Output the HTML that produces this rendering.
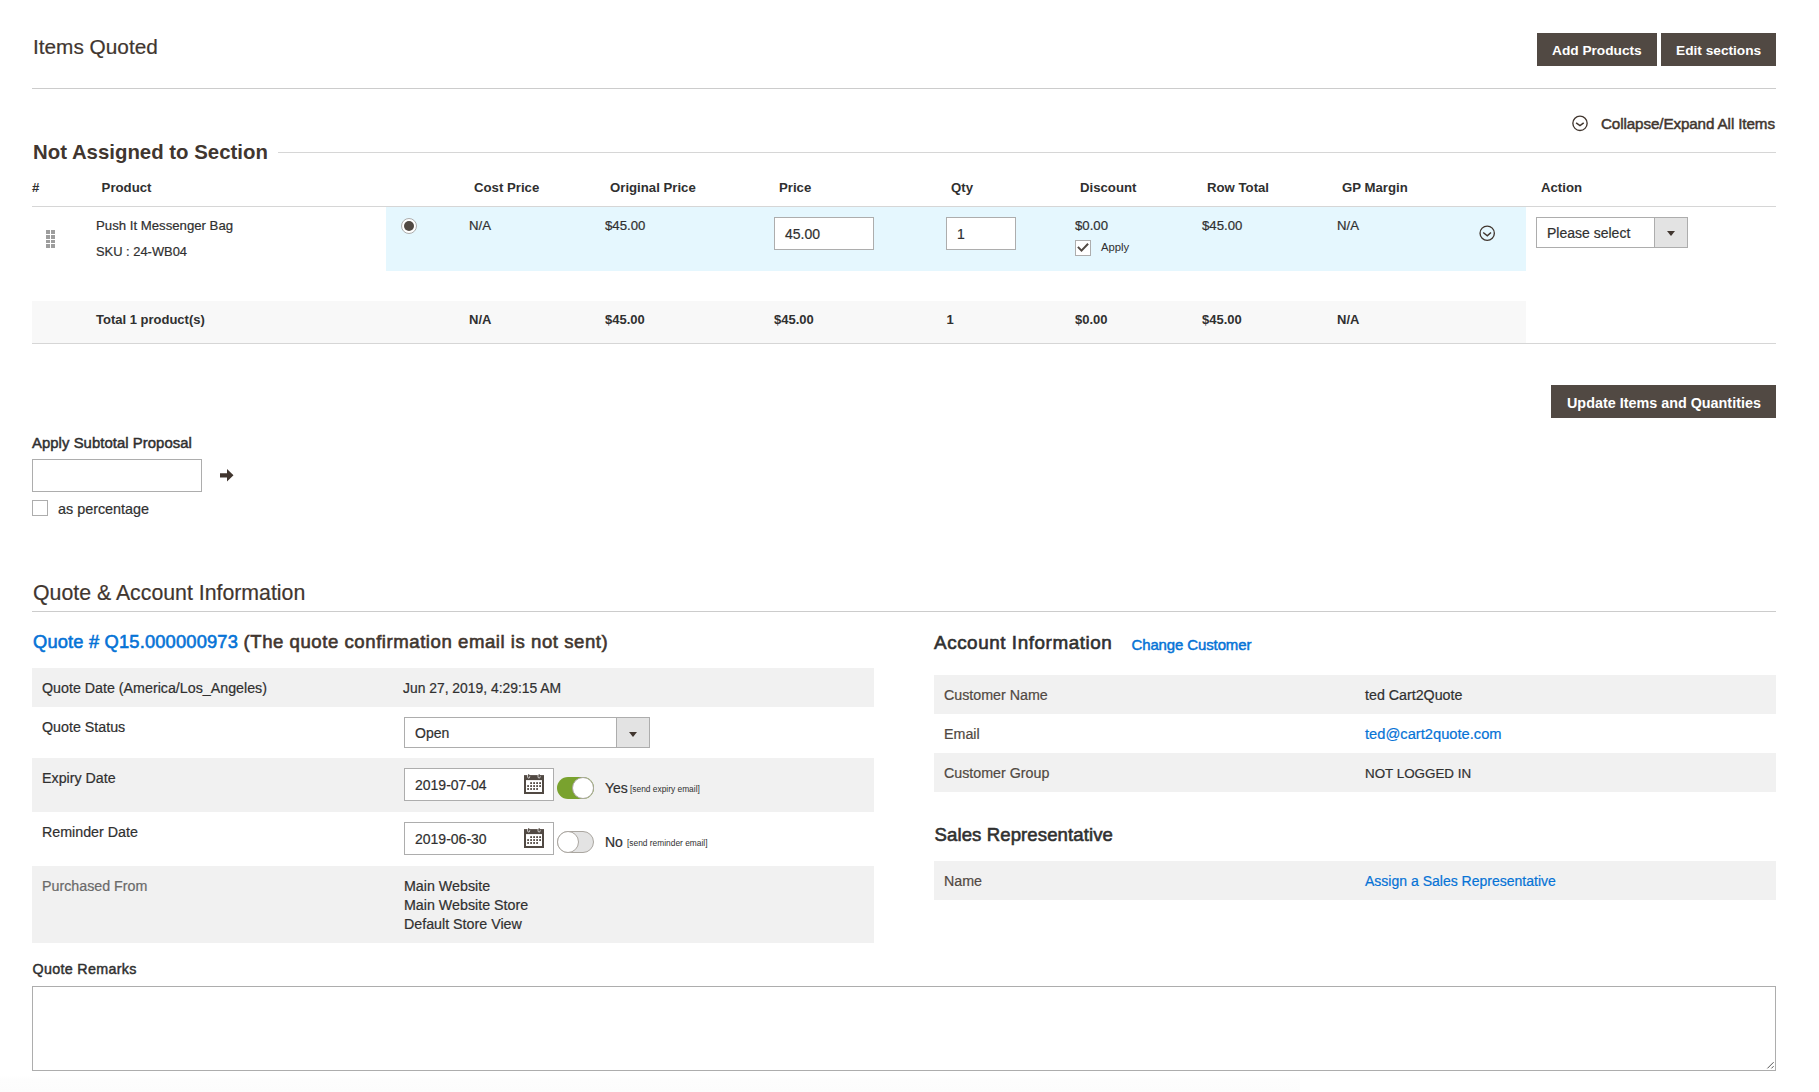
<!DOCTYPE html>
<html><head><meta charset="utf-8"><title>Items Quoted</title>
<style>
html,body{margin:0;padding:0;background:#fff;width:1819px;height:1092px;overflow:hidden;}
body{position:relative;font-family:"Liberation Sans",sans-serif;}
.t{position:absolute;white-space:nowrap;}
.r{position:absolute;box-sizing:content-box;}
</style></head><body>
<div class="t" style="left:33px;top:37.39px;font-size:20.8px;line-height:20.8px;font-weight:normal;color:#41362f;-webkit-text-stroke:0.2px #41362f;">Items Quoted</div>
<div class="r" style="left:1537px;top:33px;width:120px;height:33px;background:#514943"></div>
<div class="t" style="left:1552px;top:44.40px;font-size:13.7px;line-height:13.7px;font-weight:bold;color:#fff;">Add Products</div>
<div class="r" style="left:1661px;top:33px;width:115px;height:33px;background:#514943"></div>
<div class="t" style="left:1676px;top:44.40px;font-size:13.7px;line-height:13.7px;font-weight:bold;color:#fff;">Edit sections</div>
<div class="r" style="left:32px;top:88px;width:1744px;height:1px;background:#cccccc"></div>
<svg class="r" style="left:1571px;top:114px" width="18" height="18" viewBox="0 0 18 18"><circle cx="9" cy="9.3" r="7.15" fill="none" stroke="#41362f" stroke-width="1.35"/><path d="M5.1 8.8 L9 11.6 L12.7 8.8" fill="none" stroke="#41362f" stroke-width="1.5"/></svg>
<div class="t" style="left:1601px;top:116.32px;font-size:15.22px;line-height:15.22px;font-weight:normal;color:#41362f;-webkit-text-stroke:0.49px #41362f;letter-spacing:-0.117px">Collapse/Expand All Items</div>
<div class="t" style="left:33px;top:141.73px;font-size:20.4px;line-height:20.4px;font-weight:bold;color:#41362f;">Not Assigned to Section</div>
<div class="r" style="left:278px;top:152px;width:1498px;height:1px;background:#d6d6d6"></div>
<div class="t" style="left:32px;top:180.83px;font-size:13.2px;line-height:13.2px;font-weight:bold;color:#303030;">#</div>
<div class="t" style="left:101.6px;top:180.83px;font-size:13.2px;line-height:13.2px;font-weight:bold;color:#303030;">Product</div>
<div class="t" style="left:474px;top:180.83px;font-size:13.2px;line-height:13.2px;font-weight:bold;color:#303030;">Cost Price</div>
<div class="t" style="left:610px;top:180.83px;font-size:13.2px;line-height:13.2px;font-weight:bold;color:#303030;">Original Price</div>
<div class="t" style="left:779px;top:180.83px;font-size:13.2px;line-height:13.2px;font-weight:bold;color:#303030;">Price</div>
<div class="t" style="left:951px;top:180.83px;font-size:13.2px;line-height:13.2px;font-weight:bold;color:#303030;">Qty</div>
<div class="t" style="left:1080px;top:180.83px;font-size:13.2px;line-height:13.2px;font-weight:bold;color:#303030;">Discount</div>
<div class="t" style="left:1207px;top:180.83px;font-size:13.2px;line-height:13.2px;font-weight:bold;color:#303030;">Row Total</div>
<div class="t" style="left:1342px;top:180.83px;font-size:13.2px;line-height:13.2px;font-weight:bold;color:#303030;">GP Margin</div>
<div class="t" style="left:1541px;top:180.83px;font-size:13.2px;line-height:13.2px;font-weight:bold;color:#303030;">Action</div>
<div class="r" style="left:32px;top:206px;width:1744px;height:1px;background:#d6d6d6"></div>
<div class="r" style="left:386px;top:207px;width:1140px;height:64px;background:#e5f7fe"></div>
<div class="r" style="left:46px;top:230px;width:4px;height:4px;background:#9d9d9d"></div>
<div class="r" style="left:46px;top:235px;width:4px;height:3.5px;background:#9d9d9d"></div>
<div class="r" style="left:46px;top:239.5px;width:4px;height:3.5px;background:#9d9d9d"></div>
<div class="r" style="left:46px;top:244px;width:4px;height:4px;background:#9d9d9d"></div>
<div class="r" style="left:51px;top:230px;width:4px;height:4px;background:#9d9d9d"></div>
<div class="r" style="left:51px;top:235px;width:4px;height:3.5px;background:#9d9d9d"></div>
<div class="r" style="left:51px;top:239.5px;width:4px;height:3.5px;background:#9d9d9d"></div>
<div class="r" style="left:51px;top:244px;width:4px;height:4px;background:#9d9d9d"></div>
<div class="t" style="left:96px;top:219.03px;font-size:13.2px;line-height:13.2px;font-weight:normal;color:#303030;-webkit-text-stroke:0.2px #303030;">Push It Messenger Bag</div>
<div class="t" style="left:96px;top:246.48px;font-size:12.9px;line-height:12.9px;font-weight:normal;color:#303030;-webkit-text-stroke:0.2px #303030;">SKU : 24-WB04</div>
<div class="r" style="left:401px;top:218px;width:14px;height:14px;border:1px solid #adadad;border-radius:50%;background:#fff"></div>
<div class="r" style="left:404px;top:221px;width:10px;height:10px;border-radius:50%;background:#514943"></div>
<div class="t" style="left:469px;top:218.83px;font-size:13.2px;line-height:13.2px;font-weight:normal;color:#303030;-webkit-text-stroke:0.2px #303030;">N/A</div>
<div class="t" style="left:605px;top:218.83px;font-size:13.2px;line-height:13.2px;font-weight:normal;color:#303030;-webkit-text-stroke:0.2px #303030;">$45.00</div>
<div class="r" style="left:774px;top:217px;width:98px;height:31px;border:1px solid #adadad;background:#fff"></div>
<div class="t" style="left:785px;top:227.15px;font-size:14px;line-height:14px;font-weight:normal;color:#303030;-webkit-text-stroke:0.2px #303030;">45.00</div>
<div class="r" style="left:946px;top:217px;width:68px;height:31px;border:1px solid #adadad;background:#fff"></div>
<div class="t" style="left:957px;top:227.15px;font-size:14px;line-height:14px;font-weight:normal;color:#303030;-webkit-text-stroke:0.2px #303030;">1</div>
<div class="t" style="left:1075px;top:218.83px;font-size:13.2px;line-height:13.2px;font-weight:normal;color:#303030;-webkit-text-stroke:0.2px #303030;">$0.00</div>
<div class="r" style="left:1075px;top:240px;width:14px;height:14px;border:1px solid #adadad;background:#fff"></div>
<svg class="r" style="left:1075px;top:240px" width="16" height="16" viewBox="0 0 16 16"><path d="M2.9 6.9 L6.5 10.6 L13.1 3.7" fill="none" stroke="#514943" stroke-width="2"/></svg>
<div class="t" style="left:1101px;top:242.43px;font-size:11.3px;line-height:11.3px;font-weight:normal;color:#303030;">Apply</div>
<div class="t" style="left:1202px;top:218.83px;font-size:13.2px;line-height:13.2px;font-weight:normal;color:#303030;-webkit-text-stroke:0.2px #303030;">$45.00</div>
<div class="t" style="left:1337px;top:218.83px;font-size:13.2px;line-height:13.2px;font-weight:normal;color:#303030;-webkit-text-stroke:0.2px #303030;">N/A</div>
<svg class="r" style="left:1478px;top:224px" width="18" height="18" viewBox="0 0 18 18"><circle cx="9.2" cy="9.2" r="7.15" fill="none" stroke="#41362f" stroke-width="1.35"/><path d="M5.2 8.5 L9.3 11.8 L13 8.5" fill="none" stroke="#41362f" stroke-width="1.5"/></svg>
<div class="r" style="left:1536px;top:217px;width:150px;height:29px;border:1px solid #adadad;background:#fff"></div>
<div class="r" style="left:1654px;top:218px;width:32px;height:29px;background:#e3e3e3;border-left:1px solid #adadad"></div>
<svg class="r" style="left:1666px;top:231px" width="10" height="7" viewBox="0 0 10 7"><path d="M1 0 L9 0 L5 5 Z" fill="#41362f"/></svg>
<div class="t" style="left:1547px;top:226.15px;font-size:14px;line-height:14px;font-weight:normal;color:#303030;-webkit-text-stroke:0.2px #303030;">Please select</div>
<div class="r" style="left:32px;top:301px;width:1494px;height:42px;background:#f8f8f8"></div>
<div class="r" style="left:32px;top:343px;width:1744px;height:1px;background:#d6d6d6"></div>
<div class="t" style="left:96px;top:313.00px;font-size:13.0px;line-height:13.0px;font-weight:bold;color:#303030;">Total 1 product(s)</div>
<div class="t" style="left:469px;top:313.00px;font-size:13.0px;line-height:13.0px;font-weight:bold;color:#303030;">N/A</div>
<div class="t" style="left:605px;top:313.00px;font-size:13.0px;line-height:13.0px;font-weight:bold;color:#303030;">$45.00</div>
<div class="t" style="left:774px;top:313.00px;font-size:13.0px;line-height:13.0px;font-weight:bold;color:#303030;">$45.00</div>
<div class="t" style="left:946.5px;top:313.00px;font-size:13.0px;line-height:13.0px;font-weight:bold;color:#303030;">1</div>
<div class="t" style="left:1075px;top:313.00px;font-size:13.0px;line-height:13.0px;font-weight:bold;color:#303030;">$0.00</div>
<div class="t" style="left:1202px;top:313.00px;font-size:13.0px;line-height:13.0px;font-weight:bold;color:#303030;">$45.00</div>
<div class="t" style="left:1337px;top:313.00px;font-size:13.0px;line-height:13.0px;font-weight:bold;color:#303030;">N/A</div>
<div class="r" style="left:1551px;top:385px;width:225px;height:33px;background:#514943"></div>
<div class="t" style="left:1567px;top:395.84px;font-size:14.37px;line-height:14.37px;font-weight:bold;color:#fff;">Update Items and Quantities</div>
<div class="t" style="left:32px;top:435.90px;font-size:14.89px;line-height:14.89px;font-weight:normal;color:#303030;-webkit-text-stroke:0.48px #303030;letter-spacing:0.049px">Apply Subtotal Proposal</div>
<div class="r" style="left:32px;top:459px;width:168px;height:31px;border:1px solid #adadad;background:#fff"></div>
<svg class="r" style="left:220px;top:468.5px" width="14" height="13" viewBox="0 0 14 13"><path d="M0 4.3 H7 V0 L13.5 6.3 L7 12.6 V8.4 H0 Z" fill="#41362f"/></svg>
<div class="r" style="left:32px;top:500px;width:14px;height:14px;border:1px solid #adadad;background:#fff"></div>
<div class="t" style="left:58px;top:501.84px;font-size:14.36px;line-height:14.36px;font-weight:normal;color:#303030;-webkit-text-stroke:0.2px #303030;">as percentage</div>
<div class="t" style="left:33px;top:582.97px;font-size:21.3px;line-height:21.3px;font-weight:normal;color:#41362f;-webkit-text-stroke:0.2px #41362f;">Quote &amp; Account Information</div>
<div class="r" style="left:32px;top:611px;width:1744px;height:1px;background:#cccccc"></div>
<div class="t" style="left:33px;top:633.00px;font-size:18.31px;line-height:18.31px;font-weight:normal;color:#0673d6;-webkit-text-stroke:0.59px #0673d6;letter-spacing:0.172px">Quote # Q15.000000973</div>
<div class="t" style="left:243.5px;top:632.76px;font-size:18.6px;line-height:18.6px;font-weight:normal;color:#41362f;-webkit-text-stroke:0.6px #41362f;letter-spacing:0.540px">(The quote confirmation email is not sent)</div>
<div class="r" style="left:32px;top:668px;width:842px;height:39px;background:#f1f1f1"></div>
<div class="t" style="left:42px;top:681.44px;font-size:14.25px;line-height:14.25px;font-weight:normal;color:#303030;-webkit-text-stroke:0.2px #303030;">Quote Date (America/Los_Angeles)</div>
<div class="t" style="left:403px;top:682.25px;font-size:13.88px;line-height:13.88px;font-weight:normal;color:#303030;-webkit-text-stroke:0.2px #303030;">Jun 27, 2019, 4:29:15 AM</div>
<div class="t" style="left:42px;top:719.94px;font-size:14.25px;line-height:14.25px;font-weight:normal;color:#303030;-webkit-text-stroke:0.2px #303030;">Quote Status</div>
<div class="r" style="left:404px;top:717px;width:244px;height:29px;border:1px solid #adadad;background:#fff"></div>
<div class="r" style="left:616px;top:718px;width:32px;height:29px;background:#e3e3e3;border-left:1px solid #adadad"></div>
<svg class="r" style="left:628px;top:732px" width="10" height="7" viewBox="0 0 10 7"><path d="M1 0 L9 0 L5 5 Z" fill="#41362f"/></svg>
<div class="t" style="left:415px;top:725.75px;font-size:14px;line-height:14px;font-weight:normal;color:#303030;-webkit-text-stroke:0.2px #303030;">Open</div>
<div class="r" style="left:32px;top:758px;width:842px;height:54px;background:#f1f1f1"></div>
<div class="t" style="left:42px;top:770.94px;font-size:14.25px;line-height:14.25px;font-weight:normal;color:#303030;-webkit-text-stroke:0.2px #303030;">Expiry Date</div>
<div class="r" style="left:404px;top:768px;width:148px;height:31px;border:1px solid #adadad;background:#fff"></div>
<svg class="r" style="left:523.9px;top:773.9px" width="21" height="21" viewBox="0 0 21 21"><rect x="0" y="1.1" width="20" height="18.9" fill="#514943"/><rect x="2" y="6.1" width="16" height="11.9" fill="#fff"/><path d="M3.7 0.2 V3 A1 1 0 0 0 5.7 3 V2.2 M14.1 0.2 V3 A1 1 0 0 0 16.1 3 V2.2" fill="none" stroke="#fff" stroke-width="0.8"/><rect x="4.3" y="0" width="0.9" height="3.3" fill="#514943"/><rect x="14.7" y="0" width="0.9" height="3.3" fill="#514943"/><rect x="6.2" y="8.20" width="1.8" height="1.8" fill="#514943"/><rect x="9.2" y="8.20" width="1.8" height="1.8" fill="#514943"/><rect x="12.2" y="8.20" width="1.8" height="1.8" fill="#514943"/><rect x="15.2" y="8.20" width="1.8" height="1.8" fill="#514943"/><rect x="3.2" y="11.15" width="1.8" height="1.8" fill="#514943"/><rect x="6.2" y="11.15" width="1.8" height="1.8" fill="#514943"/><rect x="9.2" y="11.15" width="1.8" height="1.8" fill="#514943"/><rect x="12.2" y="11.15" width="1.8" height="1.8" fill="#514943"/><rect x="15.2" y="11.15" width="1.8" height="1.8" fill="#514943"/><rect x="3.2" y="14.10" width="1.8" height="1.8" fill="#514943"/><rect x="6.2" y="14.10" width="1.8" height="1.8" fill="#514943"/><rect x="9.2" y="14.10" width="1.8" height="1.8" fill="#514943"/><rect x="12.2" y="14.10" width="1.8" height="1.8" fill="#514943"/></svg>
<div class="t" style="left:415px;top:778.15px;font-size:14px;line-height:14px;font-weight:normal;color:#303030;-webkit-text-stroke:0.2px #303030;">2019-07-04</div>
<div class="r" style="left:557px;top:777px;width:37px;height:22px;box-sizing:border-box;border-radius:11px;background:#79a22e"></div>
<div class="r" style="left:572px;top:777px;width:22px;height:22px;box-sizing:border-box;border-radius:50%;background:#fff;border:1px solid #aaa6a0"></div>
<div class="t" style="left:605px;top:781.15px;font-size:14px;line-height:14px;font-weight:normal;color:#303030;-webkit-text-stroke:0.2px #303030;">Yes</div>
<div class="t" style="left:630px;top:784.89px;font-size:8.4px;line-height:8.4px;font-weight:normal;color:#303030;">[send expiry email]</div>
<div class="t" style="left:42px;top:824.94px;font-size:14.25px;line-height:14.25px;font-weight:normal;color:#303030;-webkit-text-stroke:0.2px #303030;">Reminder Date</div>
<div class="r" style="left:404px;top:822px;width:148px;height:31px;border:1px solid #adadad;background:#fff"></div>
<svg class="r" style="left:523.9px;top:827.9px" width="21" height="21" viewBox="0 0 21 21"><rect x="0" y="1.1" width="20" height="18.9" fill="#514943"/><rect x="2" y="6.1" width="16" height="11.9" fill="#fff"/><path d="M3.7 0.2 V3 A1 1 0 0 0 5.7 3 V2.2 M14.1 0.2 V3 A1 1 0 0 0 16.1 3 V2.2" fill="none" stroke="#fff" stroke-width="0.8"/><rect x="4.3" y="0" width="0.9" height="3.3" fill="#514943"/><rect x="14.7" y="0" width="0.9" height="3.3" fill="#514943"/><rect x="6.2" y="8.20" width="1.8" height="1.8" fill="#514943"/><rect x="9.2" y="8.20" width="1.8" height="1.8" fill="#514943"/><rect x="12.2" y="8.20" width="1.8" height="1.8" fill="#514943"/><rect x="15.2" y="8.20" width="1.8" height="1.8" fill="#514943"/><rect x="3.2" y="11.15" width="1.8" height="1.8" fill="#514943"/><rect x="6.2" y="11.15" width="1.8" height="1.8" fill="#514943"/><rect x="9.2" y="11.15" width="1.8" height="1.8" fill="#514943"/><rect x="12.2" y="11.15" width="1.8" height="1.8" fill="#514943"/><rect x="15.2" y="11.15" width="1.8" height="1.8" fill="#514943"/><rect x="3.2" y="14.10" width="1.8" height="1.8" fill="#514943"/><rect x="6.2" y="14.10" width="1.8" height="1.8" fill="#514943"/><rect x="9.2" y="14.10" width="1.8" height="1.8" fill="#514943"/><rect x="12.2" y="14.10" width="1.8" height="1.8" fill="#514943"/></svg>
<div class="t" style="left:415px;top:832.15px;font-size:14px;line-height:14px;font-weight:normal;color:#303030;-webkit-text-stroke:0.2px #303030;">2019-06-30</div>
<div class="r" style="left:557px;top:831px;width:37px;height:22px;box-sizing:border-box;border-radius:11px;background:#e3e3e3;border:1px solid #aaa6a0"></div>
<div class="r" style="left:557px;top:831px;width:22px;height:22px;box-sizing:border-box;border-radius:50%;background:#fff;border:1px solid #aaa6a0"></div>
<div class="t" style="left:605px;top:835.15px;font-size:14px;line-height:14px;font-weight:normal;color:#303030;-webkit-text-stroke:0.2px #303030;">No</div>
<div class="t" style="left:627px;top:838.89px;font-size:8.4px;line-height:8.4px;font-weight:normal;color:#303030;">[send reminder email]</div>
<div class="r" style="left:32px;top:866px;width:842px;height:77px;background:#f1f1f1"></div>
<div class="t" style="left:42px;top:878.94px;font-size:14.25px;line-height:14.25px;font-weight:normal;color:#6a6a6a;-webkit-text-stroke:0.2px #6a6a6a;">Purchased From</div>
<div class="t" style="left:404px;top:878.94px;font-size:14.25px;line-height:14.25px;font-weight:normal;color:#303030;-webkit-text-stroke:0.2px #303030;">Main Website</div>
<div class="t" style="left:404px;top:898.24px;font-size:14.25px;line-height:14.25px;font-weight:normal;color:#303030;-webkit-text-stroke:0.2px #303030;">Main Website Store</div>
<div class="t" style="left:404px;top:916.64px;font-size:14.25px;line-height:14.25px;font-weight:normal;color:#303030;-webkit-text-stroke:0.2px #303030;">Default Store View</div>
<div class="t" style="left:934px;top:634.02px;font-size:18.88px;line-height:18.88px;font-weight:normal;color:#303030;-webkit-text-stroke:0.6px #303030;letter-spacing:0.561px">Account Information</div>
<div class="t" style="left:1131.5px;top:638.34px;font-size:14.95px;line-height:14.95px;font-weight:normal;color:#0673d6;-webkit-text-stroke:0.48px #0673d6;letter-spacing:-0.094px">Change Customer</div>
<div class="r" style="left:934px;top:675px;width:842px;height:39px;background:#f1f1f1"></div>
<div class="r" style="left:934px;top:753px;width:842px;height:39px;background:#f1f1f1"></div>
<div class="t" style="left:944px;top:687.94px;font-size:14.25px;line-height:14.25px;font-weight:normal;color:#514943;-webkit-text-stroke:0.2px #514943;">Customer Name</div>
<div class="t" style="left:1365px;top:687.94px;font-size:14.25px;line-height:14.25px;font-weight:normal;color:#303030;-webkit-text-stroke:0.2px #303030;">ted Cart2Quote</div>
<div class="t" style="left:944px;top:726.94px;font-size:14.25px;line-height:14.25px;font-weight:normal;color:#514943;-webkit-text-stroke:0.2px #514943;">Email</div>
<div class="t" style="left:1365px;top:726.56px;font-size:14.7px;line-height:14.7px;font-weight:normal;color:#0673d6;-webkit-text-stroke:0.2px #0673d6;">ted@cart2quote.com</div>
<div class="t" style="left:944px;top:765.94px;font-size:14.25px;line-height:14.25px;font-weight:normal;color:#514943;-webkit-text-stroke:0.2px #514943;">Customer Group</div>
<div class="t" style="left:1365px;top:766.66px;font-size:13.4px;line-height:13.4px;font-weight:normal;color:#303030;-webkit-text-stroke:0.2px #303030;">NOT LOGGED IN</div>
<div class="t" style="left:934.5px;top:826.28px;font-size:18.57px;line-height:18.57px;font-weight:normal;color:#303030;-webkit-text-stroke:0.59px #303030;letter-spacing:0.105px">Sales Representative</div>
<div class="r" style="left:934px;top:861px;width:842px;height:39px;background:#f1f1f1"></div>
<div class="t" style="left:944px;top:873.94px;font-size:14.25px;line-height:14.25px;font-weight:normal;color:#514943;-webkit-text-stroke:0.2px #514943;">Name</div>
<div class="t" style="left:1365px;top:874.13px;font-size:14.02px;line-height:14.02px;font-weight:normal;color:#0673d6;-webkit-text-stroke:0.2px #0673d6;">Assign a Sales Representative</div>
<div class="r" style="left:0px;top:1076px;width:1300px;height:16px;background:linear-gradient(#fff 0px,#fdfdfd 4px,#fcfcfc 16px)"></div>
<div class="t" style="left:32.5px;top:961.89px;font-size:14.31px;line-height:14.31px;font-weight:normal;color:#303030;-webkit-text-stroke:0.46px #303030;letter-spacing:0.317px">Quote Remarks</div>
<div class="r" style="left:32px;top:986px;width:1742px;height:83px;border:1px solid #adadad;background:#fff"></div>
<svg class="r" style="left:1763px;top:1059px" width="12" height="12" viewBox="0 0 12 12"><path d="M4.4 9.4 L10.6 3.2 M8.4 9.4 L10.6 7.2" stroke="#555" stroke-width="1"/></svg>
</body></html>
